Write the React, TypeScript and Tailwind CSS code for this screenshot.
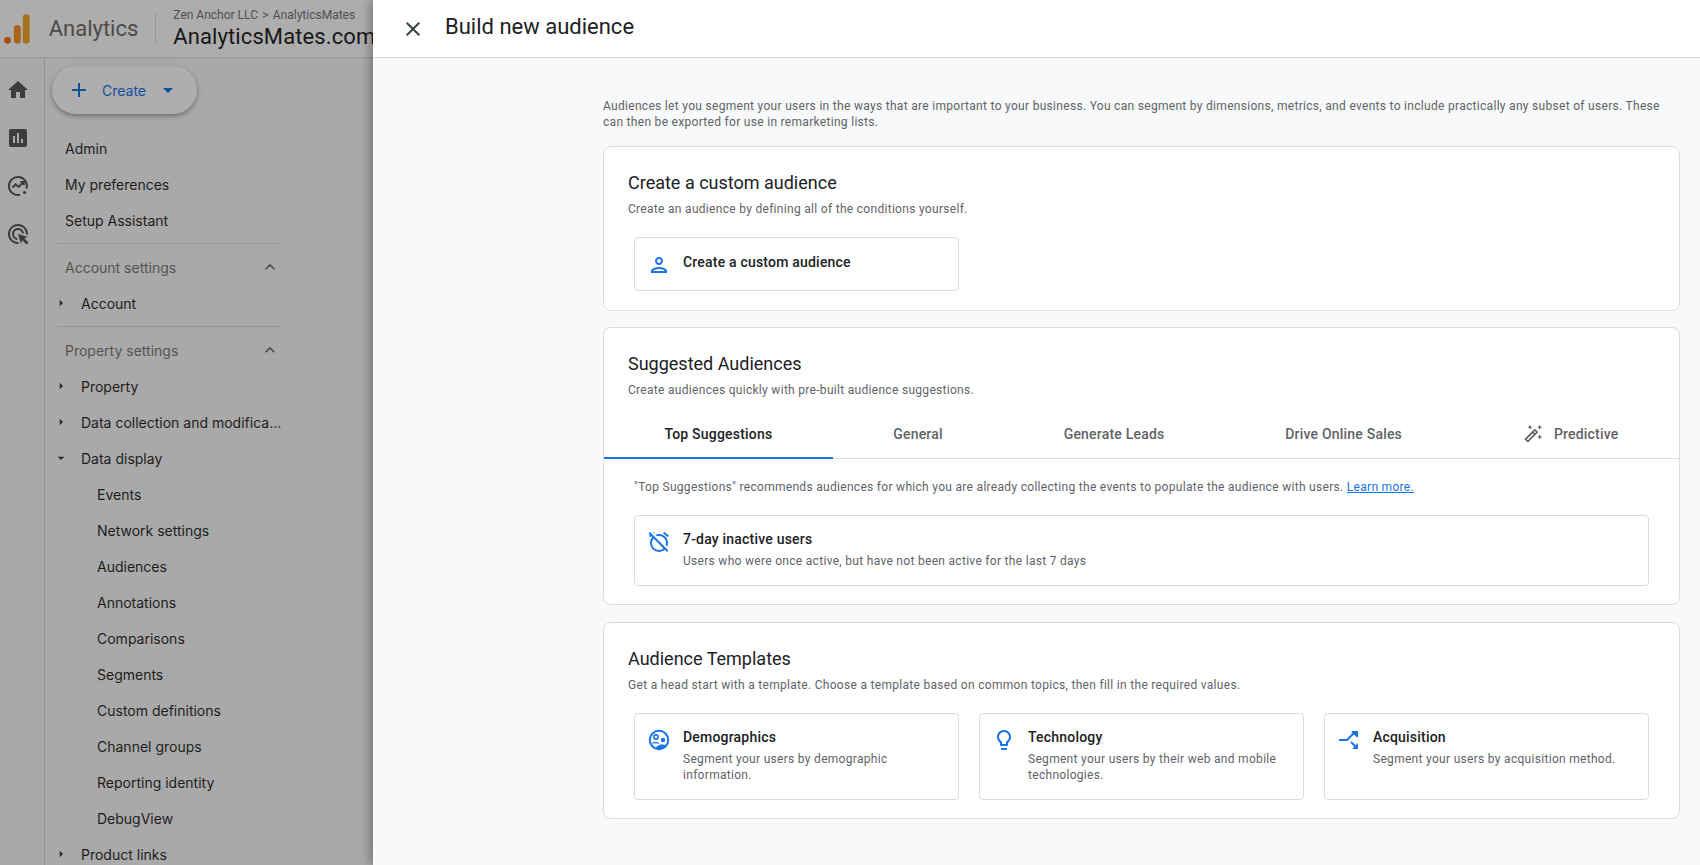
import { ReactNode } from 'react';
import {
  MdAdd,
  MdAdsClick,
  MdArrowDropDown,
  MdArrowRight,
  MdClose,
  MdExpandLess,
  MdHome,
  MdInsertChart,
  MdOutlineAlarmOff,
  MdOutlineAutoFixHigh,
  MdOutlineLightbulb,
  MdOutlinePerson,
} from 'react-icons/md';

const InsightsIcon = () => (
  <svg viewBox="0 0 24 24" className="h-6 w-6" fill="none" stroke="#3c3c3c" strokeWidth="2">
    <path d="M20.5 14.5A9 9 0 1 0 14 20.7" />
    <path d="M6.5 13.5l3.2-3.2 3 2.6 4.3-4.4" />
    <path d="M14.5 8h3.2v3.2" />
    <circle cx="18.5" cy="18.5" r="1.6" fill="#3c3c3c" stroke="none" />
  </svg>
);

const DemographicsIcon = () => (
  <svg viewBox="0 0 24 24" className="h-6 w-6">
    <circle cx="12" cy="12" r="9.2" fill="none" stroke="#1a73e8" strokeWidth="2" />
    <circle cx="9" cy="9" r="2.1" fill="none" stroke="#1a73e8" strokeWidth="1.6" />
    <circle cx="16" cy="12" r="2.2" fill="#1a73e8" />
    <path d="M5 15.2c2-1.2 5-1.2 7 .3M9 20.5c1-2.4 3.5-3.8 6.4-3.6 1.400.1 2.600.4 3.600.9-1.600 2.200-4 3.400-7 3.400z" fill="#1a73e8" stroke="#1a73e8" strokeWidth="1" />
  </svg>
);

const AcquisitionIcon = () => (
  <svg viewBox="0 0 24 24" className="h-6 w-6" fill="none" stroke="#1a73e8" strokeWidth="2">
    <path d="M2 12h8l8-8" />
    <path d="M14 3.500h6v6" fill="#1a73e8" stroke="none" />
    <path d="M14 14l5 5" />
    <path d="M21 15v6h-6z" fill="#1a73e8" stroke="none" />
    <path d="M14.500 3h6.500v6.500z" fill="#1a73e8" stroke="none" />
  </svg>
);

const Logo = () => (
  <svg viewBox="0 0 27 30" className="h-[30px] w-[27px]">
    <rect x="19" y="0" width="7" height="30" rx="3.500" fill="#a8701c" />
    <rect x="10" y="11" width="7" height="19" rx="3.500" fill="#a9641a" />
    <circle cx="3.500" cy="26.500" r="3.500" fill="#a4500f" />
  </svg>
);

const NavRow = ({ label, indent = 65, caret }: { label: string; indent?: number; caret?: 'right' | 'down' }) => (
  <div className="relative flex h-9 items-center text-[14px] text-[#1d1d1d]" style={{ paddingLeft: indent - 45 }}>
    {caret === 'right' && <MdArrowRight className="absolute left-[8px] h-[16px] w-[16px] text-[#2a2a2a]" />}
    {caret === 'down' && <MdArrowDropDown className="absolute left-[8px] h-[16px] w-[16px] text-[#2a2a2a]" />}
    <span className="truncate">{label}</span>
  </div>
);

const GroupHead = ({ label }: { label: string }) => (
  <div className="flex h-9 w-[236px] items-center justify-between pl-[20px] text-[14px] text-[#545454]">
    <span>{label}</span>
    <MdExpandLess className="mr-[1px] h-[20px] w-[20px] text-[#4a4a4a]" />
  </div>
);

const Sidebar = () => (
  <aside className="flex h-full w-[373px] shrink-0 flex-col overflow-hidden bg-[#a9a9a9] font-['Inter',sans-serif]">
    <header className="flex h-[58px] shrink-0 items-center border-b border-[#959595] bg-[#adadad] pl-[4px]">
      <Logo />
      <span className="ml-[18px] text-[22px] text-[#4b4b4b] font-['Roboto',sans-serif]">Analytics</span>
      <div className="ml-[17px] h-[31px] w-px bg-[#959595]" />
      <div className="ml-[17px] min-w-0 font-['Roboto',sans-serif]">
        <div className="flex items-center text-[12px] leading-[16px] text-[#505050]">
          Zen Anchor LLC
          <span className="mx-[4px] text-[13px] leading-none">&gt;</span>
          AnalyticsMates
        </div>
        <div className="text-[22px] leading-[28px] whitespace-nowrap tracking-[0.1px] text-[#181818]">AnalyticsMates.com</div>
      </div>
    </header>
    <div className="flex min-h-0 flex-1">
      <div className="flex w-[45px] shrink-0 flex-col items-center gap-6 border-r border-[#929292] pr-[9px] pt-[20px] text-[#3c3c3c]">
        <MdHome className="h-6 w-6" />
        <MdInsertChart className="h-6 w-6" />
        <InsightsIcon />
        <MdAdsClick className="h-6 w-6" />
      </div>
      <div className="min-w-0 flex-1">
        <div className="ml-[7px] mt-[8px] flex h-[48px] w-[145px] items-center rounded-full bg-[#aeaeae] pl-[15px] shadow-[0_2px_5px_rgba(0,0,0,0.35)]">
          <MdAdd className="h-[24px] w-[24px] text-[#0f4f9e]" />
          <span className="ml-[11px] text-[14px] text-[#0f4f9e]">Create</span>
          <MdArrowDropDown className="ml-[10px] h-[24px] w-[24px] text-[#0f4f9e]" />
        </div>
        <div className="mt-[16px]">
          <NavRow label="Admin" />
          <NavRow label="My preferences" />
          <NavRow label="Setup Assistant" />
          <div className="my-[5px] ml-[12px] h-px w-[224px] bg-[#959595]" />
          <GroupHead label="Account settings" />
          <NavRow label="Account" indent={81} caret="right" />
          <div className="my-[5px] ml-[12px] h-px w-[224px] bg-[#959595]" />
          <GroupHead label="Property settings" />
          <NavRow label="Property" indent={81} caret="right" />
          <div className="w-[238px]">
            <NavRow label="Data collection and modification" indent={81} caret="right" />
          </div>
          <NavRow label="Data display" indent={81} caret="down" />
          {['Events', 'Network settings', 'Audiences', 'Annotations', 'Comparisons', 'Segments', 'Custom definitions', 'Channel groups', 'Reporting identity', 'DebugView'].map((item) => (
            <NavRow key={item} label={item} indent={97} />
          ))}
          <NavRow label="Product links" indent={81} caret="right" />
        </div>
      </div>
    </div>
  </aside>
);

const Card = ({ title, subtitle, className, children }: { title: string; subtitle: string; className: string; children: ReactNode }) => (
  <section className={`rounded-[8px] border border-[#dadce0] bg-white ${className}`}>
    <h2 className="px-[24px] pt-[23px] text-[18px] leading-[26px] text-[#202124] font-['Roboto',sans-serif]">{title}</h2>
    <p className="mt-[5px] px-[24px] text-[12px] leading-[16px] tracking-[0.3px] text-[#5f6368]">{subtitle}</p>
    {children}
  </section>
);

const Option = ({ icon, title, text, className }: { icon: ReactNode; title: string; text?: string; className: string }) => (
  <div className={`flex rounded-[4px] border border-[#dadce0] bg-white pl-[12px] ${className}`}>
    <div className="w-[36px] shrink-0 pt-[1px] text-[#1a73e8]">{icon}</div>
    <div className="pr-[12px]">
      <div className="text-[14px] leading-[20px] font-medium tracking-[0.2px] text-[#202124]">{title}</div>
      {text && <div className="mt-[4px] text-[12px] leading-[16px] tracking-[0.3px] text-[#5f6368]">{text}</div>}
    </div>
  </div>
);

const tabs = ['General', 'Generate Leads', 'Drive Online Sales'];

const Panel = () => (
  <main className="relative z-10 flex h-full min-w-0 flex-1 flex-col bg-[#f8f9fa] font-['Roboto',sans-serif] shadow-[-3px_0_10px_rgba(0,0,0,0.3)]">
    <header className="flex h-[58px] shrink-0 items-center border-b border-[#dadce0] bg-white pl-[28px]">
      <MdClose className="h-[24px] w-[24px] text-[#3c4043]" />
      <h1 className="ml-[20px] pb-[4px] text-[22px] text-[#202124]">Build new audience</h1>
    </header>
    <div className="flex-1 pl-[230px] pr-[20px]">
      <p className="mt-[40px] text-[12px] leading-[16px] tracking-[0.3px] text-[#5f6368]">
        Audiences let you segment your users in the ways that are important to your business. You can segment by dimensions, metrics, and events to include practically any subset of users. These can then be exported for use in remarketing lists.
      </p>
      <Card className="mt-[16px] h-[165px]" title="Create a custom audience" subtitle="Create an audience by defining all of the conditions yourself.">
        <div className="px-[30px] pt-[20px]">
          <Option className="h-[54px] w-[325px] pt-[14px]" icon={<MdOutlinePerson className="h-6 w-6" />} title="Create a custom audience" />
        </div>
      </Card>
      <Card className="mt-[16px] h-[278px]" title="Suggested Audiences" subtitle="Create audiences quickly with pre-built audience suggestions.">
        <div className="mt-[13px] flex h-[48px] border-b border-[#dadce0] text-[14px] font-medium tracking-[0.2px] text-[#5f6368]">
          <div className="relative flex grow items-center justify-center pb-[1px] text-[#202124]">
            Top Suggestions
            <div className="absolute inset-x-0 -bottom-px h-[2px] bg-[#1a73e8]" />
          </div>
          {tabs.map((tab) => (
            <div key={tab} className="flex grow items-center justify-center pb-[1px]">{tab}</div>
          ))}
          <div className="flex grow items-center justify-center gap-[11px] pb-[1px]">
            <MdOutlineAutoFixHigh className="h-[20px] w-[20px]" />
            Predictive
          </div>
        </div>
        <p className="mt-[20px] px-[30px] text-[12px] leading-[16px] tracking-[0.3px] text-[#5f6368]">
          "Top Suggestions" recommends audiences for which you are already collecting the events to populate the audience with users.{' '}
          <a className="text-[#1a73e8] underline">Learn more.</a>
        </p>
        <div className="px-[30px] pt-[20px]">
          <Option className="h-[71px] pt-[13px]" icon={<MdOutlineAlarmOff className="h-6 w-6" />} title="7-day inactive users" text="Users who were once active, but have not been active for the last 7 days" />
        </div>
      </Card>
      <Card className="mt-[17px] h-[197px]" title="Audience Templates" subtitle="Get a head start with a template. Choose a template based on common topics, then fill in the required values.">
        <div className="grid grid-cols-3 gap-[20px] px-[30px] pt-[20px]">
          <Option className="h-[87px] pt-[13px]" icon={<DemographicsIcon />} title="Demographics" text="Segment your users by demographic information." />
          <Option className="h-[87px] pt-[13px]" icon={<MdOutlineLightbulb className="h-6 w-6" />} title="Technology" text="Segment your users by their web and mobile technologies." />
          <Option className="h-[87px] pt-[13px]" icon={<AcquisitionIcon />} title="Acquisition" text="Segment your users by acquisition method." />
        </div>
      </Card>
    </div>
  </main>
);

export default function App() {
  return (
    <div className="flex h-[865px] w-full overflow-hidden">
      <Sidebar />
      <Panel />
    </div>
  );
}
